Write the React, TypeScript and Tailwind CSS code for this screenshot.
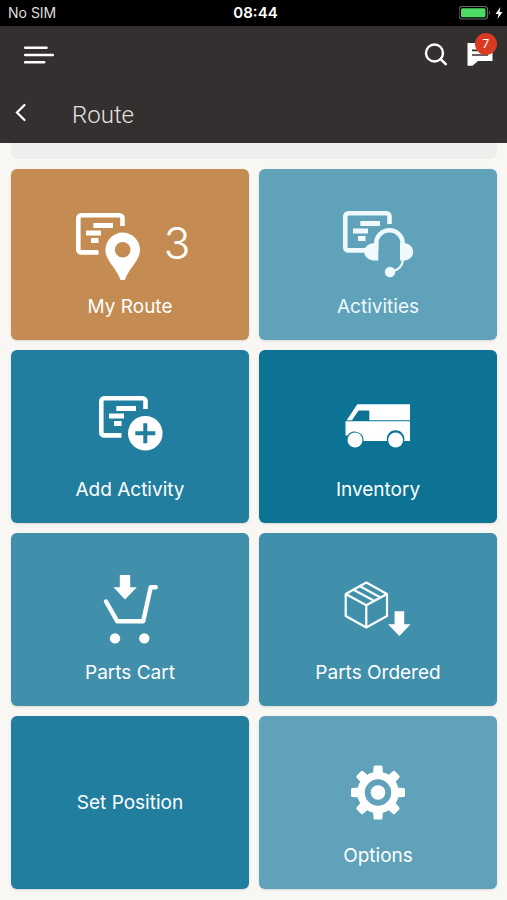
import type { ReactNode } from "react";

function DocumentShape({ x, y }: { x: number; y: number }) {
  return (
    <g transform={`translate(${x} ${y})`}>
      <path
        d="M22.5 39.4H5.3a3 3 0 0 1-3-3V5.3a3 3 0 0 1 3-3H43.5a3 3 0 0 1 3 3V13"
        fill="none"
        stroke="currentColor"
        strokeWidth="4.6"
      />
      <path d="M17.3 10h19.7v5H17.3zM10 17.5h15v5H10zM15 25h7.5v5H15z" fill="currentColor" />
    </g>
  );
}

function RouteIcon() {
  return (
    <svg className="h-[74px] w-16 shrink-0" viewBox="0 0 64 74" aria-hidden="true">
      <DocumentShape x={0} y={5} />
      <path
        fill="currentColor"
        fillRule="evenodd"
        d="M46.7 24.6a17.3 17.3 0 0 1 17.3 17.3c0 11-10.5 17-15.2 30.2h-4.2C39.9 58.9 29.4 52.9 29.4 41.9A17.3 17.3 0 0 1 46.7 24.6zM46.7 34a7.8 7.8 0 1 0 0 15.6a7.8 7.8 0 0 0 0-15.6z"
      />
    </svg>
  );
}

function HeadsetIcon() {
  return (
    <svg className="h-[74px] w-[72px]" viewBox="0 0 72 74" aria-hidden="true">
      <DocumentShape x={1} y={3} />
      <path
        d="M34.2 42V35.5a13.2 13.2 0 0 1 26.5 0V42"
        fill="none"
        stroke="currentColor"
        strokeWidth="4.5"
      />
      <path
        d="M36.3 35v17.5h-3.5c-5.8 0-10.6-3.6-10.6-8.7S27 35 32.8 35zM58 35v17.5h3.5c5.4 0 9.7-3.6 9.7-8.7S66.9 35 61.5 35z"
        fill="currentColor"
      />
      <path d="M61 51c-.5 7-4.5 11.5-12 12.5" fill="none" stroke="currentColor" strokeWidth="2.2" />
      <circle cx="48" cy="64" r="5.2" fill="currentColor" />
    </svg>
  );
}

function AddIcon() {
  return (
    <svg className="h-[74px] w-[66px]" viewBox="0 0 66 74" aria-hidden="true">
      <DocumentShape x={2} y={5} />
      <path
        fill="currentColor"
        fillRule="evenodd"
        d="M48.3 25a17.3 17.3 0 1 0 0 34.6a17.3 17.3 0 0 0 0-34.6zM46.3 32.3h4v8h8v4h-8v8h-4v-8h-8v-4h8z"
      />
    </svg>
  );
}

function VanIcon() {
  return (
    <svg className="h-[74px] w-[68px]" viewBox="0 0 68 74" aria-hidden="true">
      <path
        fill="currentColor"
        fillRule="evenodd"
        d="M13.3 13.3H66v16H2.7zM14.5 19.5L8 29.3H25.3V19.5z"
      />
      <path
        fill="currentColor"
        d="M1.5 30.2H66V50H60.2a8.8 8.8 0 1 0-17.2 0H19.6a8.8 8.8 0 0 0-16-5.5H1.5z"
      />
      <circle cx="11" cy="49" r="7.5" fill="currentColor" />
      <circle cx="51.6" cy="49" r="7.5" fill="currentColor" />
    </svg>
  );
}

function CartIcon() {
  return (
    <svg className="h-[74px] w-[56px]" viewBox="0 0 56 74" aria-hidden="true">
      <path d="M17.8 1h10.4v12.3h6.6L23 25.5 11.5 13.3h6.3z" fill="currentColor" />
      <path
        d="M4 27.5L15.300 47.300H41.200L48.700 13.200h5"
        fill="none"
        stroke="currentColor"
        strokeWidth="4.4"
        strokeLinecap="round"
        strokeLinejoin="round"
      />
      <circle cx="13" cy="64.4" r="5.2" fill="currentColor" />
      <circle cx="42.3" cy="64.4" r="5.2" fill="currentColor" />
    </svg>
  );
}

function ParcelIcon() {
  return (
    <svg className="h-[74px] w-[68px]" viewBox="0 0 68 74" aria-hidden="true">
      <path
        d="M22.3 8.5L43 20V42L22.3 53.5 1.7 42V20zM1.7 20l20.6 11.2L43 20M22.3 31.2v22.3M9.5 15.8L30.5 27M16 12.2L36.5 23.5"
        fill="none"
        stroke="currentColor"
        strokeWidth="2.2"
        strokeLinejoin="round"
      />
      <path d="M50.6 37.3h9.6v13h6.4L55.4 62 44 50.3h6.6z" fill="currentColor" />
    </svg>
  );
}

const teeth = [0, 45, 90, 135, 180, 225, 270, 315];

function GearIcon() {
  return (
    <svg className="h-[74px] w-[56px]" viewBox="0 0 56 74" aria-hidden="true">
      {teeth.map((angle) => (
        <path
          key={angle}
          d="M25 8.5h6q1.500 0 1.500 1.500l.5 8h-10l.5-8q0-1.500 1.500-1.500z"
          transform={`rotate(${angle} 28 35.5)`}
          fill="currentColor"
        />
      ))}
      <circle cx="28" cy="35.5" r="17" fill="none" stroke="currentColor" strokeWidth="7.6" />
      <circle cx="28" cy="35.5" r="7.3" fill="currentColor" />
    </svg>
  );
}

type TileProps = { label: string; color: string; icon?: ReactNode; count?: number };

const tiles: TileProps[] = [
  { label: "My Route", color: "bg-[#c48c52]", icon: <RouteIcon />, count: 3 },
  { label: "Activities", color: "bg-[#5fa2ba] text-[#f0f9fd]", icon: <HeadsetIcon /> },
  { label: "Add Activity", color: "bg-[#217e9f]", icon: <AddIcon /> },
  { label: "Inventory", color: "bg-[#0c7394]", icon: <VanIcon /> },
  { label: "Parts Cart", color: "bg-[#408fab]", icon: <CartIcon /> },
  { label: "Parts Ordered", color: "bg-[#408fab]", icon: <ParcelIcon /> },
  { label: "Set Position", color: "bg-[#217e9f]" },
  { label: "Options", color: "bg-[#5fa2ba]", icon: <GearIcon /> },
];

function Tile({ label, color, icon, count }: TileProps) {
  return (
    <button
      type="button"
      className={`flex flex-col items-center rounded-md shadow-sm ${icon ? "justify-end gap-[11px] pb-[19px]" : "justify-center"} ${color}`}
    >
      {icon && (
        <span className={`flex items-start gap-6 ${count !== undefined ? "pl-1.5" : ""}`}>
          {icon}
          {count !== undefined && <span className="text-[44px] leading-[70px] font-light">{count}</span>}
        </span>
      )}
      <span className="text-[19px] leading-7">{label}</span>
    </button>
  );
}

export default function App() {
  return (
    <div className="min-h-screen bg-[#f8f7f3] font-['Inter','Liberation_Sans',sans-serif] text-white">
      <div className="grid h-[26px] grid-cols-3 items-center bg-black pr-1 pl-2 text-sm leading-[26px] text-[#dedede]">
        <span>No SIM</span>
        <span className="text-center text-[15px] font-semibold text-white">08:44</span>
        <span className="flex items-center justify-end gap-1">
          <svg className="h-4 w-8" viewBox="0 0 32 16" aria-hidden="true">
            <rect x="0" y="1.5" width="28.5" height="12.5" rx="3" fill="none" stroke="#6b6b6b" strokeWidth="1.2" />
            <rect x="2" y="3.3" width="24.5" height="9" rx="1.5" fill="#4cd964" />
            <path d="M30 5.5q2 2.3 0 4.6z" fill="#6b6b6b" />
          </svg>
          <svg className="h-4 w-2" viewBox="0 0 8 16" aria-hidden="true">
            <path d="M5.5 2L.5 9h3L2.5 14 7.5 7h-3z" fill="white" />
          </svg>
        </span>
      </div>

      <header className="bg-[#34302f]">
        <div className="flex h-[58px] items-center pr-3 pl-6">
          <button type="button" aria-label="Menu">
            <svg className="h-5 w-[30px]" viewBox="0 0 30 20" aria-hidden="true">
              <path
                d="M1.2 2.7H22.5M1.2 10H28.8M1.2 17.3H20.2"
                stroke="white"
                strokeWidth="2.6"
                strokeLinecap="round"
              />
            </svg>
          </button>
          <button type="button" aria-label="Search" className="ml-auto">
            <svg className="size-6" viewBox="0 0 24 24" aria-hidden="true">
              <circle cx="11.5" cy="10" r="8.5" fill="none" stroke="white" strokeWidth="2.4" />
              <path d="M17.7 16.2l5 5" stroke="white" strokeWidth="2.6" strokeLinecap="round" />
            </svg>
          </button>
          <button type="button" aria-label="Messages, 7 unread" className="relative ml-4 h-6 w-8">
            <svg className="h-6 w-8" viewBox="0 0 32 24" aria-hidden="true">
              <path d="M4.500 0h25v18H15L9.5 22.7H4.500z" fill="white" />
              <path d="M9 7.3h16M9 12h16" stroke="#34302f" strokeWidth="1.7" />
            </svg>
            <span className="absolute -top-2.5 -right-0.5 size-[22px] rounded-full bg-[#d93a22] text-center text-xs leading-[22px]">
              7
            </span>
          </button>
        </div>
        <div className="flex h-[59px] items-center gap-11 pl-3.5">
          <button type="button" aria-label="Back">
            <svg className="h-6 w-3.5" viewBox="0 0 14 24" aria-hidden="true">
              <path
                d="M10.5 3L3 10.5l7.5 7.500"
                fill="none"
                stroke="white"
                strokeWidth="2.2"
                strokeLinecap="round"
              />
            </svg>
          </button>
          <h1 className="pt-0.5 font-['Roboto','Liberation_Sans',sans-serif] text-2xl font-light text-[#e4e2e1]">
            Route
          </h1>
        </div>
      </header>

      <main className="flex flex-col gap-2.5 pr-2.5 pb-2.5 pl-[11px]">
        <div className="h-4 rounded-b-md bg-[#eeeeed]" />
        <div className="grid grid-cols-2 grid-rows-[171px_173px_173px_173px] gap-2.5">
          {tiles.map((tile) => (
            <Tile key={tile.label} {...tile} />
          ))}
        </div>
      </main>
    </div>
  );
}
